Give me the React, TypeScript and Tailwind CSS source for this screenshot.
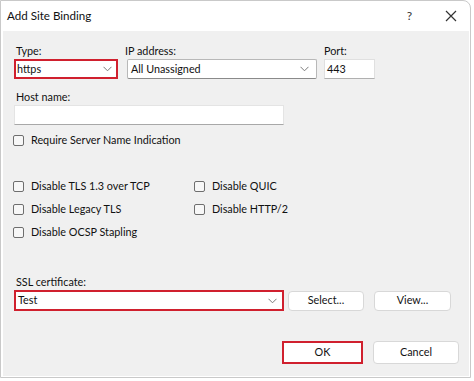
import React from "react";

const font = { fontFamily: 'Lato, "Noto Sans", sans-serif' };

function Chevron() {
  return (
    <svg width="9" height="6" viewBox="0 0 9 6" className="shrink-0">
      <path d="M0.5 0.8 L4.5 4.8 L8.5 0.8" fill="none" stroke="#7a7a7a" strokeWidth="1" />
    </svg>
  );
}

function Check({ label }: { label: string }) {
  return (
    <div className="flex items-center h-[23px]">
      <div className="w-[11px] h-[11px] rounded-[2px] border border-[#6e6e6e] bg-[#f7f7f7]" />
      <span className="ml-[7px] text-[10.8px] text-[#111] leading-none">{label}</span>
    </div>
  );
}

export default function App() {
  return (
    <div className="w-[474px] h-[381px] bg-white overflow-hidden" style={font}>
      <div className="w-[471px] h-[378px] border border-[#c9c9c9] rounded-tr-[8px] bg-white flex flex-col">
        <div className="h-[30px] flex items-center pl-[6px] shrink-0">
          <span className="text-[11.6px] text-[#111]">Add Site Binding</span>
          <span className="ml-auto text-[12px] text-[#333] mr-[33px]">?</span>
          <svg width="12" height="12" viewBox="0 0 12 12" className="mr-[13px]">
            <path d="M1 1 L11 11 M11 1 L1 11" stroke="#333" strokeWidth="1.2" />
          </svg>
        </div>
        <div className="flex-1 bg-[#f0f0f0] ml-[2px] mr-[1px] mb-[1px] pl-[11px] pt-[11px] flex flex-col text-[10.8px] text-[#111]">
          <div className="flex">
            <div className="flex flex-col w-[104px]">
              <span className="pl-[2px] h-[17px] leading-[17px]">Type:</span>
              <div className="h-[20px] border-2 border-[#d0202e] bg-white flex items-center pl-[1px] pr-[4px]">
                <span className="flex-1">https</span>
                <Chevron />
              </div>
            </div>
            <div className="flex flex-col ml-[9px] w-[190px]">
              <span className="-ml-[2px] h-[17px] leading-[17px]">IP address:</span>
              <div className="h-[20px] border border-[#b8b8b8] border-b-[#8a8a8a] bg-white flex items-center pl-[3px] pr-[7px] rounded-[2px]">
                <span className="flex-1">All Unassigned</span>
                <Chevron />
              </div>
            </div>
            <div className="flex flex-col ml-[7px] w-[51px]">
              <span className="h-[17px] leading-[17px]">Port:</span>
              <div className="h-[20px] border border-[#e0e0e0] border-b-[#b0b0b0] bg-white flex items-center pl-[2px]">
                443
              </div>
            </div>
          </div>
          <span className="mt-[9px] pl-[2px] h-[17px] leading-[17px]">Host name:</span>
          <div className="w-[270px] h-[20px] border border-[#e4e4e4] border-b-[#a8a8a8] bg-white" />
          <div className="mt-[4px] -ml-[1px]">
            <Check label="Require Server Name Indication" />
          </div>
          <div className="mt-[23px] -ml-[1px] flex">
            <div className="flex flex-col w-[181px]">
              <Check label="Disable TLS 1.3 over TCP" />
              <Check label="Disable Legacy TLS" />
              <Check label="Disable OCSP Stapling" />
            </div>
            <div className="flex flex-col">
              <Check label="Disable QUIC" />
              <Check label="Disable HTTP/2" />
            </div>
          </div>
          <span className="mt-[29px] pl-[2px] h-[17px] leading-[17px]">SSL certificate:</span>
          <div className="flex items-center">
            <div className="w-[270px] h-[21px] border-2 border-[#d0202e] bg-white flex items-center pl-[2px] pr-[5px]">
              <span className="flex-1">Test</span>
              <Chevron />
            </div>
            <div className="ml-[4px] w-[76px] h-[20px] border border-[#d8d8d8] rounded-[4px] bg-white flex items-center justify-center">
              Select...
            </div>
            <div className="ml-[10px] w-[77px] h-[20px] border border-[#d8d8d8] rounded-[4px] bg-white flex items-center justify-center">
              View...
            </div>
          </div>
          <div className="flex mt-[30px]">
            <div className="ml-[268px] w-[81px] h-[23px] border-2 border-[#d0202e] bg-white flex items-center justify-center">
              OK
            </div>
            <div className="ml-[10px] w-[86px] h-[23px] border border-[#d8d8d8] rounded-[4px] bg-white flex items-center justify-center">
              Cancel
            </div>
          </div>
        </div>
      </div>
    </div>
  );
}
